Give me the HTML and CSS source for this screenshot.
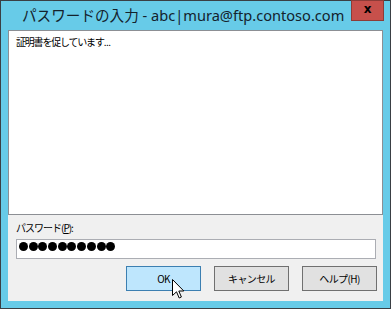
FILE: index.html
```html
<!DOCTYPE html>
<html lang="ja">
<head>
<meta charset="utf-8">
<link rel="stylesheet" href="styles.css">
</head>
<body>
<div class="window">
  <div class="titlebar">
    <div class="title">パスワードの入力 - abc|mura@ftp.contoso.com</div>
    <div class="close">x</div>
  </div>
  <div class="client">
    <div class="log">証明書を促しています<span class="ell">...</span></div>
    <div class="label">パスワード(<u>P</u>):</div>
    <div class="input">
      <span class="dot"></span><span class="dot"></span><span class="dot"></span><span class="dot"></span><span class="dot"></span><span class="dot"></span><span class="dot"></span><span class="dot"></span><span class="dot"></span><span class="dot"></span>
    </div>
    <div class="buttons">
      <div class="btn btn-hot">OK</div>
      <div class="btn">キャンセル</div>
      <div class="btn">ヘルプ(H)</div>
    </div>
  </div>
  <svg class="cursor" width="13" height="21" viewBox="0 0 13 21">
    <path d="M0.5 0.5 L0.5 16.5 L4.5 12.8 L7.2 19 L9.4 18 L6.8 12 L11.8 12 Z" fill="#fff" stroke="#000" stroke-width="1" stroke-linejoin="miter"/>
  </svg>
</div>
</body>
</html>
```
FILE: styles.css
```css
* { box-sizing: border-box; }
html, body { margin: 0; padding: 0; }
body {
  width: 391px;
  height: 309px;
  overflow: hidden;
  font-family: "Noto Sans CJK JP", "Noto Sans", sans-serif;
}
.window {
  position: relative;
  width: 391px;
  height: 309px;
  background: #67cbe8;
  border: 1px solid #3a3f44;
  display: flex;
  flex-direction: column;
}
.titlebar {
  height: 29px;
  display: flex;
  align-items: flex-start;
}
.title {
  flex: 1;
  padding-left: 21px;
  padding-top: 3px;
  font-family: "Noto Sans", "Noto Sans CJK JP", sans-serif;
  font-size: 14.6px;
  line-height: 22px;
  color: #14222c;
  white-space: nowrap;
}
.close {
  width: 33px;
  height: 21px;
  margin-right: 6px;
  margin-top: -1px;
  background: #c7504b;
  border: 1px solid #8e3b37;
  color: #000;
  font-family: "DejaVu Sans", sans-serif;
  font-weight: bold;
  font-size: 12px;
  line-height: 17px;
  text-align: center;
}
.client {
  flex: 1;
  margin: 0 7px 7px 7px;
  background: #f0f0f0;
  display: flex;
  flex-direction: column;
}
.log {
  height: 185px;
  background: #fff;
  border: 1px solid #8c8f94;
  padding: 4px 7px;
  font-size: 10px;
  letter-spacing: -1.2px;
  line-height: 14px;
  color: #000;
}
.ell { letter-spacing: -0.5px; }
.label {
  margin-top: 5px;
  padding-left: 8px;
  font-size: 10px;
  letter-spacing: -1px;
  line-height: 16px;
  color: #000;
}
.label u { text-decoration-thickness: 1px; text-underline-offset: 1px; }
.input {
  margin: 3px 0 0 8px;
  width: 360px;
  height: 20px;
  background: #fff;
  border: 1px solid #abadb3;
  display: flex;
  align-items: flex-start;
  padding: 2px 0 0 2px;
}
.dot {
  width: 9px;
  height: 9px;
  border-radius: 50%;
  background: #000;
  margin-right: 0.7px;
}
.buttons {
  margin-top: 7px;
  display: flex;
  justify-content: flex-end;
  gap: 13px;
  padding-right: 6px;
}
.btn {
  width: 75px;
  height: 25px;
  background: #e1e1e1;
  border: 1px solid #707070;
  font-size: 10px;
  letter-spacing: -0.6px;
  line-height: 23px;
  text-align: center;
  color: #000;
}
.btn-hot {
  background: #bee6fd;
  border-color: #3c7fb1;
}
.cursor {
  position: absolute;
  left: 171px;
  top: 278px;
}
```
